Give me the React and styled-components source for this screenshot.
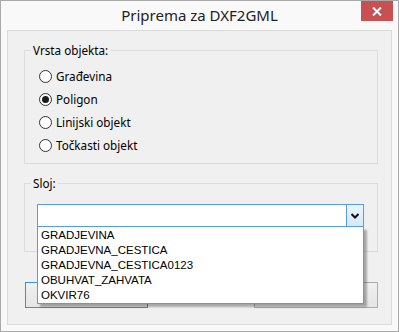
import React from "react";
import styled, { createGlobalStyle } from "styled-components";

const Global = createGlobalStyle`
  html, body { margin: 0; padding: 0; background: #ffffff; }
  body { font-family: "Noto Sans", "Open Sans", sans-serif; }
`;

const Window = styled.div`
  width: 399px; height: 332px; box-sizing: border-box;
  border: 1px solid #a9a9a9; background: #f9f9f9;
  display: flex; flex-direction: column;
`;
const TitleBar = styled.div`
  position: relative; height: 29px; flex: none;
  display: flex; align-items: center; justify-content: center;
  font-size: 15px; color: #222; padding-bottom: 1px; box-sizing: border-box;
`;
const CloseButton = styled.div`
  position: absolute; top: 0; right: 5px; width: 32px; height: 20px;
  background: #c75050; display: flex; align-items: center; justify-content: center;
`;
const Client = styled.div`
  flex: 1; margin: 0 6px 6px 6px; border: 1px solid #dadada; background: #f0f0f0;
  padding: 19px 13px 0 16px; display: flex; flex-direction: column;
  font-size: 11.7px; color: #000;
`;
const Group = styled.div`
  position: relative; height: ${p => p.$h}px; box-sizing: border-box;
  border: 1px solid #dcdcdc; margin-bottom: ${p => p.$mb || 0}px;
  padding: ${p => p.$pad};
`;
const Legend = styled.span`
  position: absolute; top: -9px; left: 6px; padding: 0 2px; line-height: 16px;
  background: #f0f0f0;
`;
const RadioList = styled.div`
  display: flex; flex-direction: column; gap: 6px;
`;
const RadioRow = styled.label`
  display: flex; align-items: center; gap: 4px; height: 17px; line-height: 17px;
`;
const RadioCircle = styled.span`
  width: 13px; height: 13px; box-sizing: border-box; border-radius: 50%;
  border: 1px solid #333; background: #fff; display: flex;
  align-items: center; justify-content: center; flex: none;
  &::after {
    content: ""; width: 7px; height: 7px; border-radius: 50%;
    background: ${p => (p.$on ? "#1b1b1b" : "transparent")};
  }
`;
const Combo = styled.div`
  position: relative; height: 23px; box-sizing: border-box;
  border: 1px solid #569de5; background: #fff; display: flex; justify-content: flex-end;
`;
const ComboButton = styled.div`
  width: 16px; border-left: 1px solid #569de5;
  background: linear-gradient(#eaf5fd, #d3e9fb);
  display: flex; align-items: center; justify-content: center;
`;
const DropList = styled.div`
  position: absolute; left: -1px; right: -1px; top: 22px; z-index: 2;
  border: 1px solid #569de5; border-top: none; background: #fff;
  box-shadow: 3px 3px 2px rgba(0, 0, 0, 0.3);
  font-family: "Liberation Sans", Arial, sans-serif; font-size: 11.5px;
  padding-top: 1px;
`;
const DropItem = styled.div`
  height: 15px; line-height: 15px; padding-left: 3px; white-space: nowrap;
`;
const ButtonRow = styled.div`
  display: flex; justify-content: space-between; margin-top: 30px; padding: 0 0 0 1px;
`;
const Button = styled.div`
  width: ${p => p.$w}px; height: 26px; box-sizing: border-box;
  border: 1px solid ${p => (p.$def ? "#3c8fe0" : "#acacac")};
  background: linear-gradient(#f0f0f0, #e5e5e5);
`;

const radios = ["Građevina", "Poligon", "Linijski objekt", "Točkasti objekt"];
const layers = ["GRADJEVINA", "GRADJEVNA_CESTICA", "GRADJEVNA_CESTICA0123", "OBUHVAT_ZAHVATA", "OKVIR76"];

export default function App() {
  return (
    <>
      <Global />
      <Window>
        <TitleBar>
          Priprema za DXF2GML
          <CloseButton>
            <svg width="10" height="9" viewBox="0 0 10 9">
              <path d="M1 0.5 L9 8.5 M9 0.5 L1 8.5" stroke="#fff" strokeWidth="2" />
            </svg>
          </CloseButton>
        </TitleBar>
        <Client>
          <Group $h={114} $mb={19} $pad="17px 0 0 14px">
            <Legend>Vrsta objekta:</Legend>
            <RadioList>
              {radios.map((r, i) => (
                <RadioRow key={r}>
                  <RadioCircle $on={i === 1} />
                  {r}
                </RadioRow>
              ))}
            </RadioList>
          </Group>
          <Group $h={69} $pad="20px 13px 0 12px">
            <Legend>Sloj:</Legend>
            <Combo>
              <ComboButton>
                <svg width="8" height="6" viewBox="0 0 8 6">
                  <path d="M0.5 1 L4 4.5 L7.5 1" stroke="#111" strokeWidth="2" fill="none" />
                </svg>
              </ComboButton>
              <DropList>
                {layers.map(l => <DropItem key={l}>{l}</DropItem>)}
              </DropList>
            </Combo>
          </Group>
          <ButtonRow>
            <Button $w={123} $def />
            <Button $w={124} />
          </ButtonRow>
        </Client>
      </Window>
    </>
  );
}
